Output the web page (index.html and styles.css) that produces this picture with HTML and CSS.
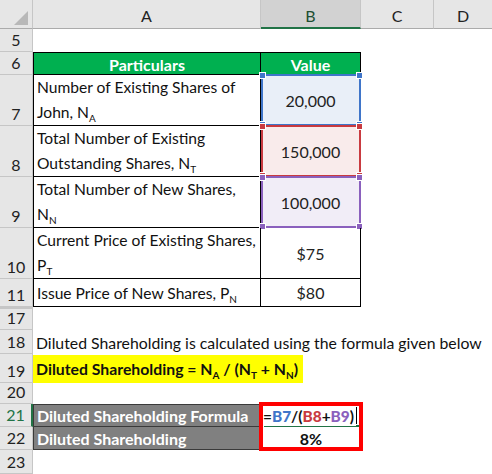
FILE: index.html
```html
<!DOCTYPE html>
<html>
<head>
<meta charset="utf-8">
<link rel="stylesheet" href="styles.css">
</head>
<body>
<div class="sheet">
  <!-- column header row -->
  <div class="corner"><span class="tri"></span></div>
  <div class="colh">A</div>
  <div class="colh sel">B</div>
  <div class="colh">C</div>
  <div class="colh last">D</div>

  <!-- row 5 -->
  <div class="rowh">5</div><div class="c"></div><div class="c"></div><div class="c"></div><div class="c"></div>

  <!-- row 6 -->
  <div class="rowh">6</div>
  <div class="c t hd tl top">Particulars</div>
  <div class="c t hd top">Value</div>
  <div class="c"></div><div class="c"></div>

  <!-- row 7 -->
  <div class="rowh">7</div>
  <div class="c t tl wrap"><span class="txt">Number of Existing Shares of<br>John, N<sub>A</sub></span></div>
  <div class="c t val blue-bg"><span class="rng blue"><i class="h h1"></i><i class="h h2"></i><i class="h h3"></i><i class="h h4"></i></span>20,000</div>
  <div class="c"></div><div class="c"></div>

  <!-- row 8 -->
  <div class="rowh">8</div>
  <div class="c t tl wrap"><span class="txt">Total Number of Existing<br>Outstanding Shares, N<sub>T</sub></span></div>
  <div class="c t val red-bg"><span class="rng red"><i class="h h1"></i><i class="h h2"></i><i class="h h3"></i><i class="h h4"></i></span>150,000</div>
  <div class="c"></div><div class="c"></div>

  <!-- row 9 -->
  <div class="rowh">9</div>
  <div class="c t tl wrap"><span class="txt">Total Number of New Shares,<br>N<sub>N</sub></span></div>
  <div class="c t val pur-bg"><span class="rng pur"><i class="h h1"></i><i class="h h2"></i><i class="h h3"></i><i class="h h4"></i></span>100,000</div>
  <div class="c"></div><div class="c"></div>

  <!-- row 10 -->
  <div class="rowh">10</div>
  <div class="c t tl wrap"><span class="txt">Current Price of Existing Shares,<br>P<sub>T</sub></span></div>
  <div class="c t val">$75</div>
  <div class="c"></div><div class="c"></div>

  <!-- row 11 -->
  <div class="rowh">11</div>
  <div class="c t tl wrap"><span class="txt">Issue Price of New Shares, P<sub>N</sub></span></div>
  <div class="c t val">$80</div>
  <div class="c"></div><div class="c"></div>

  <!-- row 17 -->
  <div class="rowh hid">17</div><div class="c"></div><div class="c"></div><div class="c"></div><div class="c"></div>

  <!-- row 18 -->
  <div class="rowh">18</div>
  <div class="c over"><span class="txt">Diluted Shareholding is calculated using the formula given below</span></div>
  <div class="c"></div><div class="c"></div><div class="c"></div>

  <!-- row 19 -->
  <div class="rowh">19</div>
  <div class="c over"><span class="hl"><span class="txt">Diluted Shareholding = N<sub>A</sub> / (N<sub>T</sub> + N<sub>N</sub>)</span></span></div>
  <div class="c"></div><div class="c"></div><div class="c"></div>

  <!-- row 20 -->
  <div class="rowh">20</div><div class="c"></div><div class="c"></div><div class="c"></div><div class="c"></div>

  <!-- row 21 -->
  <div class="rowh act">21</div>
  <div class="c gr gtop">Diluted Shareholding Formula</div>
  <div class="c res edit"><span class="fx">=<b class="fb">B7</b>/(<b class="fr">B8</b>+<b class="fp">B9</b>)</span><span class="caret"></span><span class="ul"></span><span class="redbox"></span></div>
  <div class="c"></div><div class="c"></div>

  <!-- row 22 -->
  <div class="rowh">22</div>
  <div class="c gr">Diluted Shareholding</div>
  <div class="c res pct">8%</div>
  <div class="c"></div><div class="c"></div>

  <!-- row 23 -->
  <div class="rowh">23</div><div class="c"></div><div class="c"></div><div class="c"></div><div class="c"></div>
</div>
</body>
</html>
```

FILE: styles.css
```css
html, body {
  margin: 0;
  padding: 0;
  background: #ffffff;
}
body {
  font-family: Lato, "Noto Sans", sans-serif;
  font-size: 16px;
  color: #111;
  overflow: hidden;
}
.sheet {
  display: grid;
  grid-template-columns: 33px 228px 100px 73px 58px;
  grid-template-rows: 29px 23px 23px 51px 51px 51px 51px 28px 23px 24px 29px 21px 23px 23px 24px;
  width: 492px;
  height: 474px;
}
.corner {
  background: #e6e6e6;
  border-right: 1px solid #c6c6c6;
  border-bottom: 1px solid #ababab;
  box-sizing: border-box;
  position: relative;
}
.tri {
  position: absolute;
  right: 4px;
  bottom: 3px;
  width: 0;
  height: 0;
  border-left: 14px solid transparent;
  border-bottom: 14px solid #b8b8b8;
}
.colh {
  background: #e6e6e6;
  border-right: 1px solid #c6c6c6;
  border-bottom: 1px solid #ababab;
  box-sizing: border-box;
  display: flex;
  align-items: center;
  justify-content: center;
  color: #222;
  font-size: 16px;
  padding-top: 2px;
}
.colh.last { border-right: none; }
.colh.sel {
  background: #d2d2d2;
  border-bottom: 2px solid #217346;
  color: #1d4f33;
  padding-top: 3px;
}
.rowh {
  background: #e6e6e6;
  border-right: 1px solid #c6c6c6;
  border-bottom: 1px solid #c6c6c6;
  box-sizing: border-box;
  display: flex;
  align-items: flex-end;
  justify-content: center;
  padding-bottom: 1px;
  color: #222;
  font-size: 16px;
  line-height: 20px;
}
.rowh.hid { border-top: 2px solid #c6c6c6; }
.rowh.act {
  border-right: 2px solid #217346;
  color: #217346;
}
.c {
  box-sizing: border-box;
  min-width: 0;
  position: relative;
}
.t {
  border-right: 1px solid #000;
  border-bottom: 1px solid #000;
}
.tl { border-left: 1px solid #000; }
.top { border-top: 1px solid #000; }
.hd {
  background: #00b050;
  color: #fff;
  font-weight: 700;
  display: flex;
  align-items: center;
  justify-content: center;
  padding-top: 1px;
}
.wrap {
  display: flex;
  align-items: flex-end;
  padding: 0 0 0 3px;
  line-height: 25px;
  white-space: nowrap;
  font-size: 15.6px;
}
.txt { display: block; }
sub {
  font-size: 10px;
  vertical-align: -4px;
  line-height: 0;
}
.val {
  display: flex;
  align-items: center;
  justify-content: center;
  color: #222;
}
.blue-bg { background: #e9eff8; }
.red-bg { background: #f9ebeb; }
.pur-bg { background: #f1edf7; }
.rng {
  position: absolute;
  left: 0;
  top: -1px;
  right: -1px;
  bottom: -1px;
  border: 2px solid;
  pointer-events: none;
}
.rng.blue { border-color: #3f75c9; color: #3f75c9; }
.rng.red { border-color: #c93a40; color: #c93a40; }
.rng.pur { border-color: #8a60bd; color: #8a60bd; }
.h {
  position: absolute;
  width: 5px;
  height: 5px;
  background: currentColor;
  border: 1px solid #fff;
}
.h1 { left: -4px; top: -4px; }
.h2 { right: -4px; top: -4px; }
.h3 { left: -4px; bottom: -4px; }
.h4 { right: -4px; bottom: -4px; }
.over {
  white-space: nowrap;
  overflow: visible;
  z-index: 2;
  display: flex;
  align-items: center;
  padding-left: 3px;
  font-size: 15.8px;
}
.hl {
  background: #ffff00;
  font-weight: 700;
  margin-left: -3px;
  padding: 0 5px 0 3px;
  height: 28px;
  display: flex;
  align-items: center;
}
.gr {
  background: #808080;
  color: #fff;
  font-weight: 700;
  border-left: 1px solid #3a3a3a;
  border-right: 1px solid #3a3a3a;
  border-bottom: 1px solid #3a3a3a;
  display: flex;
  align-items: center;
  padding-left: 3px;
}
.gtop { border-top: 1px solid #3a3a3a; }
.res {
  background: #fff;
  font-weight: 700;
  display: flex;
  align-items: center;
}
.edit {
  padding-left: 2px;
}
.fx { color: #111; font-size: 15.4px; }
.fb { color: #3f75c9; }
.fr { color: #c93a40; }
.fp { color: #8a60bd; }
.caret {
  display: inline-block;
  width: 1px;
  height: 17px;
  background: #000;
  margin-left: 2px;
  flex: none;
}
.ul {
  position: absolute;
  left: 3px;
  right: 4px;
  bottom: -1px;
  height: 2px;
  background: #217346;
}
.ul::after {
  content: "";
  position: absolute;
  right: -3px;
  top: -1px;
  width: 4px;
  height: 4px;
  background: #217346;
}
.pct {
  justify-content: center;
}
.redbox {
  position: absolute;
  left: -2px;
  top: -2px;
  width: 104px;
  height: 49px;
  border: 4px solid #ff0000;
  box-sizing: border-box;
  z-index: 3;
}
```
